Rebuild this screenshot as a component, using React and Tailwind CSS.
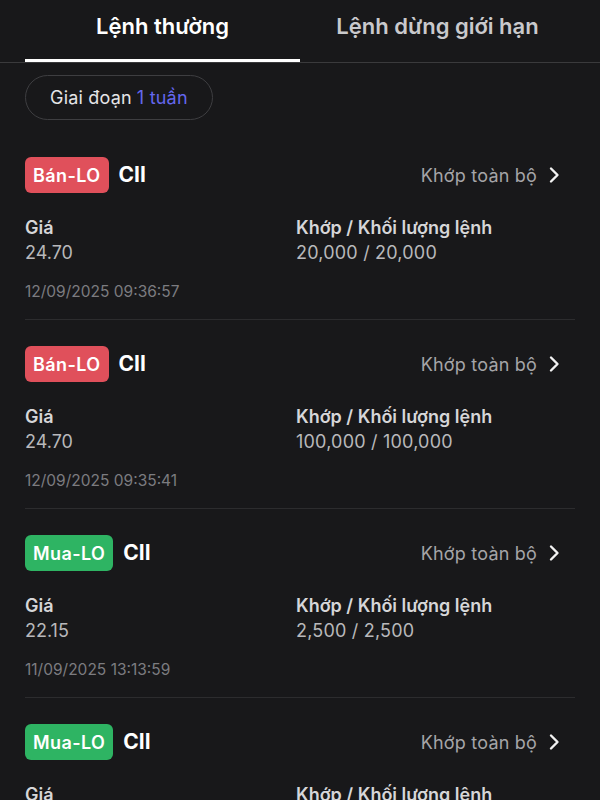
import React from "react";

const orders = [
  { side: "Bán-LO", sell: true, price: "24.70", qty: "20,000 / 20,000", time: "12/09/2025 09:36:57" },
  { side: "Bán-LO", sell: true, price: "24.70", qty: "100,000 / 100,000", time: "12/09/2025 09:35:41" },
  { side: "Mua-LO", sell: false, price: "22.15", qty: "2,500 / 2,500", time: "11/09/2025 13:13:59" },
  { side: "Mua-LO", sell: false, price: "22.15", qty: "2,500 / 2,500", time: "11/09/2025 13:10:12" },
];

function Chevron() {
  return (
    <svg width="14" height="18" viewBox="0 0 14 18" className="ml-[10px]">
      <polyline points="4,2.5 10.5,9 4,15.5" fill="none" stroke="#f2f2f2" strokeWidth="2.4" strokeLinecap="round" strokeLinejoin="round" />
    </svg>
  );
}

function Card({ o }) {
  return (
    <div className="px-[25px]">
      <div className="pt-[26px] pb-[17px] border-b border-[#2c2c2e]">
        <div className="flex items-center justify-between h-[36px]">
          <div className="flex items-center">
            <span className={"h-[36px] flex items-center rounded-[6px] px-[8px] text-[18px] tracking-[0.4px] font-semibold text-white " + (o.sell ? "bg-[#e0505b]" : "bg-[#2eb463]")}>
              {o.side}
            </span>
            <span className="ml-[10px] text-[21px] font-bold text-white">CII</span>
          </div>
          <div className="flex items-center pr-[14px]">
            <span className="text-[18px] tracking-[0.2px] text-[#a5a5a8]">Khớp toàn bộ</span>
            <Chevron />
          </div>
        </div>
        <div className="grid grid-cols-[271px_1fr] mt-[23px]">
          <div>
            <div className="text-[18px] leading-[24px] font-semibold text-[#d6d6d8]">Giá</div>
            <div className="text-[18px] leading-[26px] text-[#b8b8bb]">{o.price}</div>
          </div>
          <div>
            <div className="text-[18px] leading-[24px] font-semibold text-[#d6d6d8]">Khớp / Khối lượng lệnh</div>
            <div className="text-[18px] leading-[26px] tracking-[0.2px] text-[#b8b8bb]">{o.qty}</div>
          </div>
        </div>
        <div className="mt-[16px] text-[15.5px] leading-[20px] text-[#7c7c80]">{o.time}</div>
      </div>
    </div>
  );
}

export default function App() {
  return (
    <div className="w-[600px] h-[800px] overflow-hidden bg-[#18181a] font-['Inter','Noto_Sans',sans-serif]">
      <div className="border-b border-[#3a3a3c]">
        <div className="flex px-[25px]">
          <div className="w-[275px] h-[62px] flex flex-col">
            <div className="flex-1 flex items-center justify-center text-[22px] font-semibold text-white pb-[6px]">Lệnh thường</div>
            <div className="h-[3px] bg-white"></div>
          </div>
          <div className="w-[275px] h-[62px] flex items-center justify-center text-[22px] font-semibold text-[#c9c9cc] pb-[9px]">
            Lệnh dừng giới hạn
          </div>
        </div>
      </div>
      <div className="px-[25px] pt-[12px]">
        <div className="inline-flex items-center h-[45px] px-[24px] rounded-full border border-[#3e3e41] text-[18px] tracking-[0.2px]">
          <span className="text-[#e5e5e7]">Giai đoạn</span>
          <span className="ml-[5px] text-[#6467ee]">1 tuần</span>
        </div>
      </div>
      <div className="mt-[11px]">
        {orders.map((o, i) => (
          <Card key={i} o={o} />
        ))}
      </div>
    </div>
  );
}
